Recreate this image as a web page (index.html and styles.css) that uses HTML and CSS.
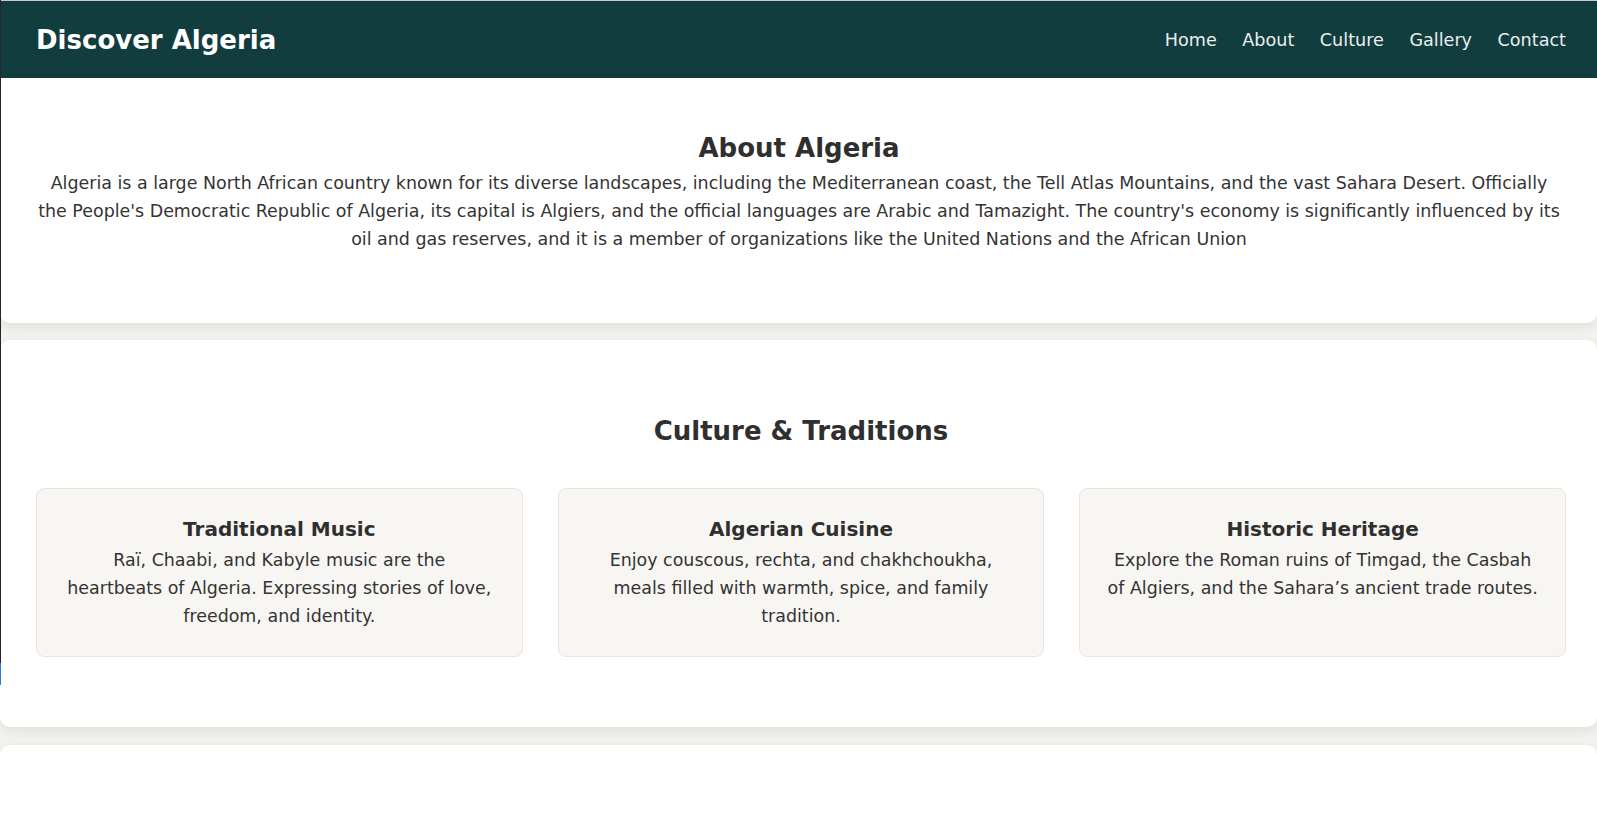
FILE: index.html
```html
<!DOCTYPE html>
<html lang="en">
<head>
<meta charset="utf-8">
<title>Discover Algeria</title>
<link rel="stylesheet" href="styles.css">
</head>
<body>
<div class="edge-line"><span class="edge-blue"></span></div>
<header class="site-header">
  <div class="brand">Discover Algeria</div>
  <nav class="nav">
    <a href="#home">Home</a>
    <a href="#about">About</a>
    <a href="#culture">Culture</a>
    <a href="#gallery">Gallery</a>
    <a href="#contact">Contact</a>
  </nav>
</header>
<main class="main">
  <section class="panel about" id="about">
    <h2 class="section-title about-title">About Algeria</h2>
    <p class="about-text">Algeria is a large North African country known for its diverse landscapes, including the Mediterranean coast, the Tell Atlas Mountains, and the vast Sahara Desert. Officially the People's Democratic Republic of Algeria, its capital is Algiers, and the official languages are Arabic and Tamazight. The country's economy is significantly influenced by its oil and gas reserves, and it is a member of organizations like the United Nations and the African Union</p>
  </section>
  <section class="panel culture" id="culture">
    <h2 class="section-title culture-title">Culture &amp; Traditions</h2>
    <div class="cards">
      <div class="card">
        <h3 class="card-title">Traditional Music</h3>
        <p class="card-text">Raï, Chaabi, and Kabyle music are the heartbeats of Algeria. Expressing stories of love, freedom, and identity.</p>
      </div>
      <div class="card">
        <h3 class="card-title">Algerian Cuisine</h3>
        <p class="card-text">Enjoy couscous, rechta, and chakhchoukha, meals filled with warmth, spice, and family tradition.</p>
      </div>
      <div class="card">
        <h3 class="card-title">Historic Heritage</h3>
        <p class="card-text">Explore the Roman ruins of Timgad, the Casbah of Algiers, and the Sahara’s ancient trade routes.</p>
      </div>
    </div>
  </section>
  <section class="panel gallery" id="gallery"></section>
</main>
</body>
</html>
```

FILE: styles.css
```css
html, body {
  margin: 0;
  padding: 0;
}

body {
  background: #f4f2ee;
  border-top: 1px solid #c9c9c9;
  font-family: "DejaVu Sans", "Noto Sans", sans-serif;
  color: #2f2f2f;
  overflow: hidden;
}

.edge-line {
  position: fixed;
  left: 0;
  top: 0;
  width: 1px;
  height: 663px;
  background: #262626;
  z-index: 10;
}

.edge-blue {
  position: absolute;
  left: 0;
  top: 663px;
  width: 1px;
  height: 22px;
  background: #2a7de1;
}

.site-header {
  height: 77px;
  background: #123d3f;
  display: flex;
  align-items: center;
  justify-content: space-between;
  padding: 0 31px 0 36px;
}

.brand {
  color: #ffffff;
  font-size: 26px;
  font-weight: bold;
}

.nav {
  display: flex;
  gap: 25.5px;
}

.nav a {
  color: #e9eeee;
  text-decoration: none;
  font-size: 17.6px;
}

.main {
  display: flex;
  flex-direction: column;
  gap: 17px;
}

.panel {
  background: #ffffff;
  border-radius: 10px;
  box-shadow: 0 4px 12px rgba(0, 0, 0, 0.08);
}

.section-title {
  margin: 0;
  font-size: 26px;
  line-height: 30px;
  font-weight: bold;
  text-align: center;
  color: #2f2f2f;
}

.about {
  padding: 55px 35px 70px 36px;
  border-top-left-radius: 0;
  border-top-right-radius: 0;
}

.about-title {
  margin-bottom: 6px;
}

.about-text {
  margin: 0;
  font-size: 17.45px;
  line-height: 28px;
  text-align: center;
  color: #333333;
}

.culture {
  padding: 76px 31px 70px 36px;
}

.culture-title {
  margin-bottom: 42px;
}

.cards {
  display: grid;
  grid-template-columns: repeat(3, 1fr);
  gap: 35px;
}

.card {
  background: #f8f6f3;
  border: 1px solid #f0e2dc;
  border-radius: 8px;
  padding: 29px 27px 26px;
  text-align: center;
}

.card-title {
  margin: 0 0 5px;
  font-size: 20px;
  line-height: 23px;
  font-weight: bold;
  color: #2f2f2f;
}

.card-text {
  margin: 0;
  font-size: 17.45px;
  line-height: 28px;
  color: #333333;
}

.gallery {
  margin-top: 1px;
  min-height: 200px;
}
```
